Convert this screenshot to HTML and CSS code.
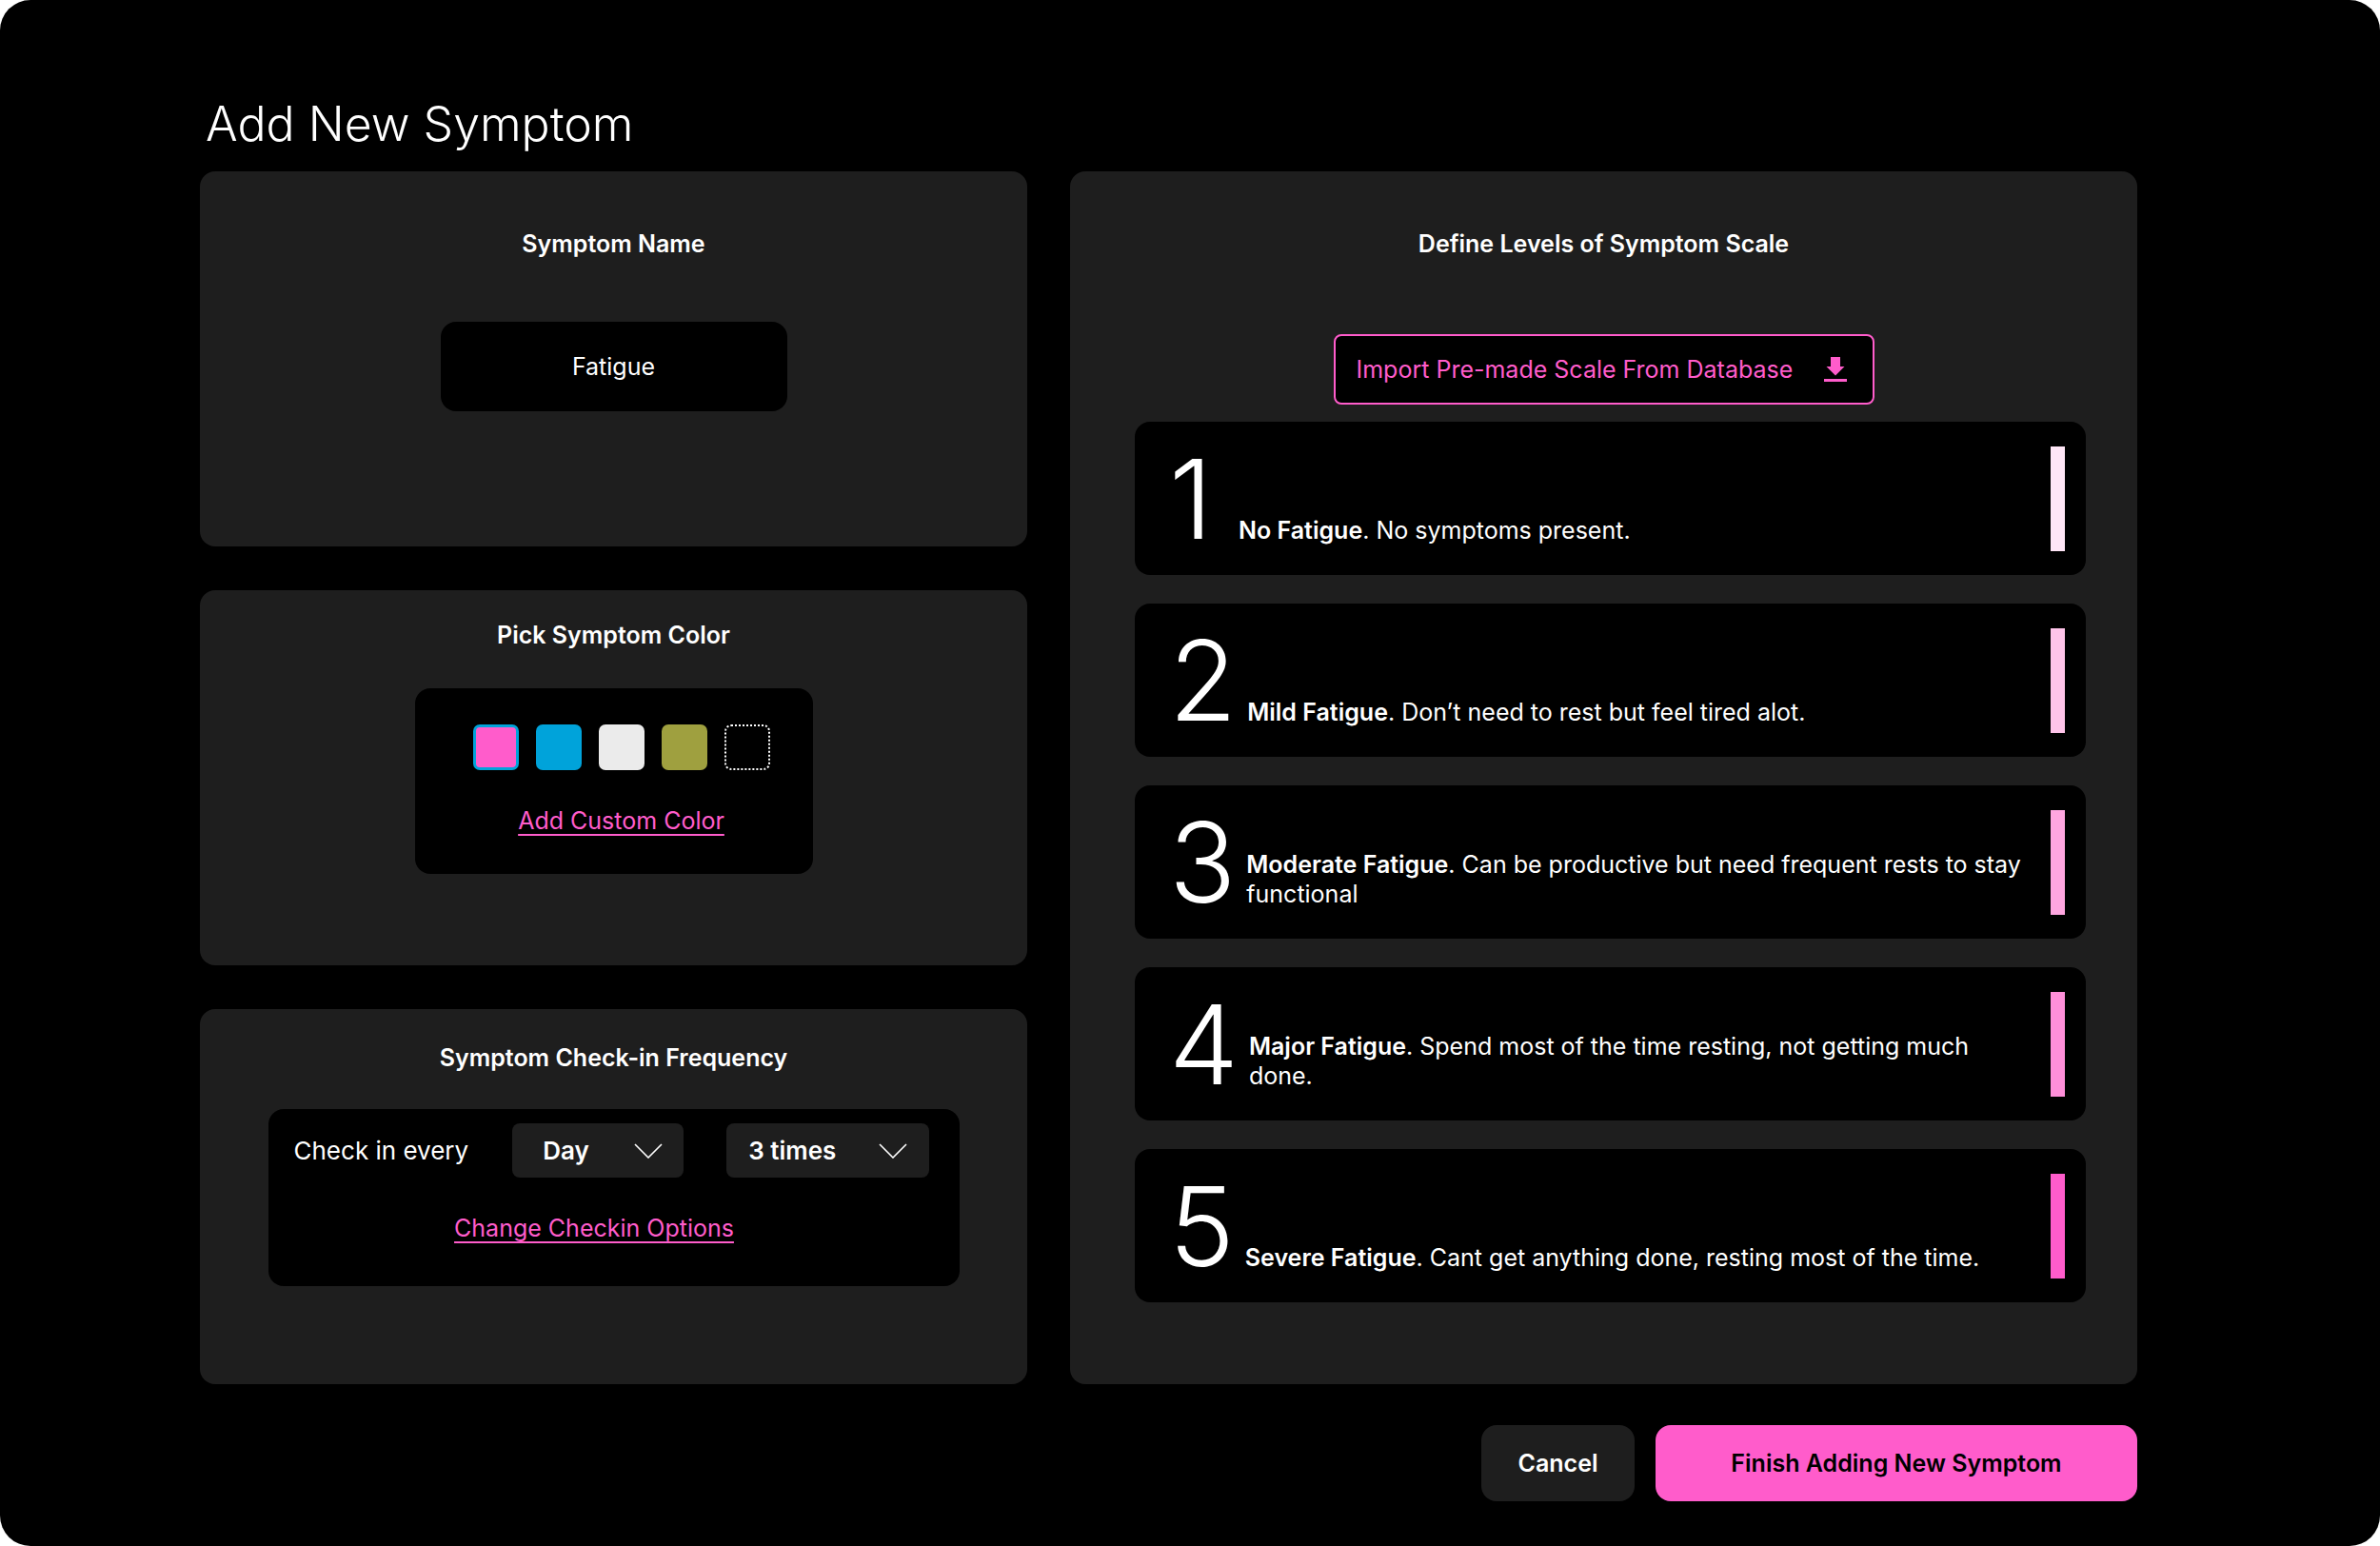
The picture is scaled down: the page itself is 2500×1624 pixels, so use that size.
FILE: index.html
```html
<!DOCTYPE html>
<html lang="en">
<head>
    <meta charset="UTF-8">
    <meta name="viewport" content="width=device-width, initial-scale=1.0">
    <title>Add New Symptom</title>
    <link rel="stylesheet" href="styles.css">
</head>
<body>
<div class="frame">
    <h1 class="page-title">Add New Symptom</h1>

    <div class="main">
        <div class="left-col">
            <section class="card card-name">
                <h2 class="card-title">Symptom Name</h2>
                <div class="name-input">Fatigue</div>
            </section>

            <section class="card card-color">
                <h2 class="card-title">Pick Symptom Color</h2>
                <div class="color-box">
                    <div class="swatches">
                        <span class="swatch swatch-pink selected"></span>
                        <span class="swatch swatch-blue"></span>
                        <span class="swatch swatch-white"></span>
                        <span class="swatch swatch-olive"></span>
                        <span class="swatch swatch-empty"></span>
                    </div>
                    <a class="link" href="#">Add Custom Color</a>
                </div>
            </section>

            <section class="card card-freq">
                <h2 class="card-title">Symptom Check-in Frequency</h2>
                <div class="freq-box">
                    <div class="freq-row">
                        <span class="freq-label">Check in every</span>
                        <div class="select select-day">
                            <span>Day</span>
                            <svg width="30" height="16" viewBox="0 0 30 16"><polyline points="1,1 15,15 29,1" fill="none" stroke="#fff" stroke-width="1.6"/></svg>
                        </div>
                        <div class="select select-times">
                            <span>3 times</span>
                            <svg width="30" height="16" viewBox="0 0 30 16"><polyline points="1,1 15,15 29,1" fill="none" stroke="#fff" stroke-width="1.6"/></svg>
                        </div>
                    </div>
                    <div class="freq-link">
                        <a class="link" href="#">Change Checkin Options</a>
                    </div>
                </div>
            </section>
        </div>

        <section class="card card-scale">
            <h2 class="card-title">Define Levels of Symptom Scale</h2>
            <button class="import-btn" type="button">
                <span>Import Pre-made Scale From Database</span>
                <svg width="24" height="27" viewBox="0 0 24 27">
                    <rect x="7" y="0" width="10" height="11" fill="#ff5ccb"/>
                    <polygon points="2.5,10 21.5,10 12,19.5" fill="#ff5ccb"/>
                    <rect x="0" y="23" width="24" height="3" fill="#ff5ccb"/>
                </svg>
            </button>

            <div class="levels">
                <div class="level">
                    <div class="level-main">
                        <span class="level-num">1</span>
                        <p class="level-text"><strong>No Fatigue</strong>. No symptoms present.</p>
                    </div>
                    <span class="level-bar bar-1"></span>
                </div>
                <div class="level">
                    <div class="level-main">
                        <span class="level-num">2</span>
                        <p class="level-text"><strong>Mild Fatigue</strong>. Don’t need to rest but feel tired alot.</p>
                    </div>
                    <span class="level-bar bar-2"></span>
                </div>
                <div class="level">
                    <div class="level-main">
                        <span class="level-num">3</span>
                        <p class="level-text"><strong>Moderate Fatigue</strong>. Can be productive but need frequent rests to stay functional</p>
                    </div>
                    <span class="level-bar bar-3"></span>
                </div>
                <div class="level">
                    <div class="level-main">
                        <span class="level-num">4</span>
                        <p class="level-text"><strong>Major Fatigue</strong>. Spend most of the time resting, not getting much done.</p>
                    </div>
                    <span class="level-bar bar-4"></span>
                </div>
                <div class="level">
                    <div class="level-main">
                        <span class="level-num">5</span>
                        <p class="level-text"><strong>Severe Fatigue</strong>. Cant get anything done, resting most of the time.</p>
                    </div>
                    <span class="level-bar bar-5"></span>
                </div>
            </div>
        </section>
    </div>

    <div class="actions">
        <button class="btn btn-cancel" type="button">Cancel</button>
        <button class="btn btn-finish" type="button">Finish Adding New Symptom</button>
    </div>
</div>
</body>
</html>
```

FILE: styles.css
```css
body {
    margin: 0;
    background: #fff;
    font-family: Inter, "Noto Sans", sans-serif;
    color: #fff;
}
.frame {
    box-sizing: border-box;
    height: 1624px;
    background: #000;
    border-radius: 32px;
    padding: 101px 255px 0 210px;
}
.page-title {
    margin: 0 0 21px 0;
    padding-left: 6px;
    font-size: 50px;
    line-height: 58px;
    font-weight: 300;
}
.main {
    display: grid;
    grid-template-columns: 869px 1121px;
    column-gap: 45px;
    height: 1274px;
}
.left-col {
    display: flex;
    flex-direction: column;
    gap: 46px;
}
.card {
    box-sizing: border-box;
    background: #1e1e1e;
    border-radius: 16px;
    display: flex;
    flex-direction: column;
    align-items: center;
}
.left-col .card {
    flex: none;
    height: 394px;
}
.card-title {
    margin: 0;
    font-size: 25px;
    line-height: 31px;
    font-weight: 600;
}
.card-name {
    padding-top: 61px;
}
.name-input {
    margin-top: 66px;
    width: 364px;
    height: 94px;
    background: #000;
    border-radius: 16px;
    display: flex;
    align-items: center;
    justify-content: center;
    font-size: 25px;
}

.card-color {
    padding-top: 32px;
}
.color-box {
    box-sizing: border-box;
    margin-top: 40px;
    width: 418px;
    background: #000;
    border-radius: 16px;
    padding: 38px 0 40px 16px;
    display: flex;
    flex-direction: column;
    align-items: center;
    gap: 38px;
}
.swatches {
    display: flex;
    gap: 18px;
}
.swatch {
    box-sizing: border-box;
    width: 48px;
    height: 48px;
    border-radius: 7px;
}
.swatch-pink { background: #ff5ccb; }
.swatch-pink.selected { border: 3px solid #00a3da; }
.swatch-blue { background: #00a3da; }
.swatch-white { background: #ebebeb; }
.swatch-olive { background: #9fa03f; }
.swatch-empty { border: 2px dotted #fff; }

.link {
    color: #ff5ccb;
    font-size: 25px;
    line-height: 31px;
    text-decoration: underline;
    text-decoration-thickness: 2px;
    text-underline-offset: 5px;
}

.card-freq {
    padding-top: 36px;
}
.freq-box {
    box-sizing: border-box;
    margin-top: 38px;
    width: 726px;
    background: #000;
    border-radius: 16px;
    padding: 15px 31px 45px 27px;
}
.freq-row {
    display: flex;
    align-items: center;
}
.freq-label {
    font-size: 26px;
    margin-right: 46px;
}
.select {
    box-sizing: border-box;
    height: 57px;
    background: #1e1e1e;
    border-radius: 8px;
    display: flex;
    align-items: center;
    justify-content: space-between;
    font-size: 26px;
    font-weight: 600;
}
.select-day {
    width: 180px;
    padding: 0 22px 0 32px;
    margin-right: 45px;
}
.select-times {
    width: 213px;
    padding: 0 23px 0 23px;
}
.freq-link {
    margin-top: 38px;
    padding-right: 37px;
    text-align: center;
}

.card-scale {
    padding-top: 61px;
}
.import-btn {
    box-sizing: border-box;
    margin-top: 79px;
    width: 568px;
    height: 74px;
    background: #000;
    border: 2px solid #ff5ccb;
    border-radius: 8px;
    color: #ff5ccb;
    font-family: inherit;
    font-size: 25px;
    display: flex;
    align-items: center;
    justify-content: space-between;
    padding: 0 27px 0 22px;
}
.levels {
    align-self: stretch;
    margin-top: 18px;
    padding: 0 54px 0 68px;
    display: flex;
    flex-direction: column;
    gap: 30px;
}
.level {
    height: 161px;
    background: #000;
    border-radius: 16px;
    display: flex;
    align-items: center;
    padding: 0 22px 0 36px;
}
.level-main {
    flex: 1;
    display: flex;
    align-items: flex-end;
    gap: 11px;
}
.level-num {
    min-width: 62px;
    font-size: 116px;
    line-height: 116px;
    font-weight: 300;
}
.level-text {
    flex: 1;
    margin: 0 26px 0 0;
    padding-bottom: 9px;
    font-size: 25px;
    line-height: 31px;
}
.level-text strong {
    font-weight: 600;
}
.level-bar {
    width: 15px;
    height: 110px;
}
.bar-1 { background: #ffe6f7; }
.bar-2 { background: #ffc4ea; }
.bar-3 { background: #ffa6e0; }
.bar-4 { background: #ff8fd9; }
.bar-5 { background: #ff5ccb; }

.actions {
    margin-top: 43px;
    display: flex;
    justify-content: flex-end;
    gap: 22px;
}
.btn {
    height: 80px;
    border: none;
    border-radius: 16px;
    font-family: inherit;
    font-size: 25px;
    font-weight: 600;
}
.btn-cancel {
    width: 161px;
    background: #1e1e1e;
    color: #fff;
}
.btn-finish {
    width: 506px;
    background: #ff5ccb;
    color: #000;
}
```
